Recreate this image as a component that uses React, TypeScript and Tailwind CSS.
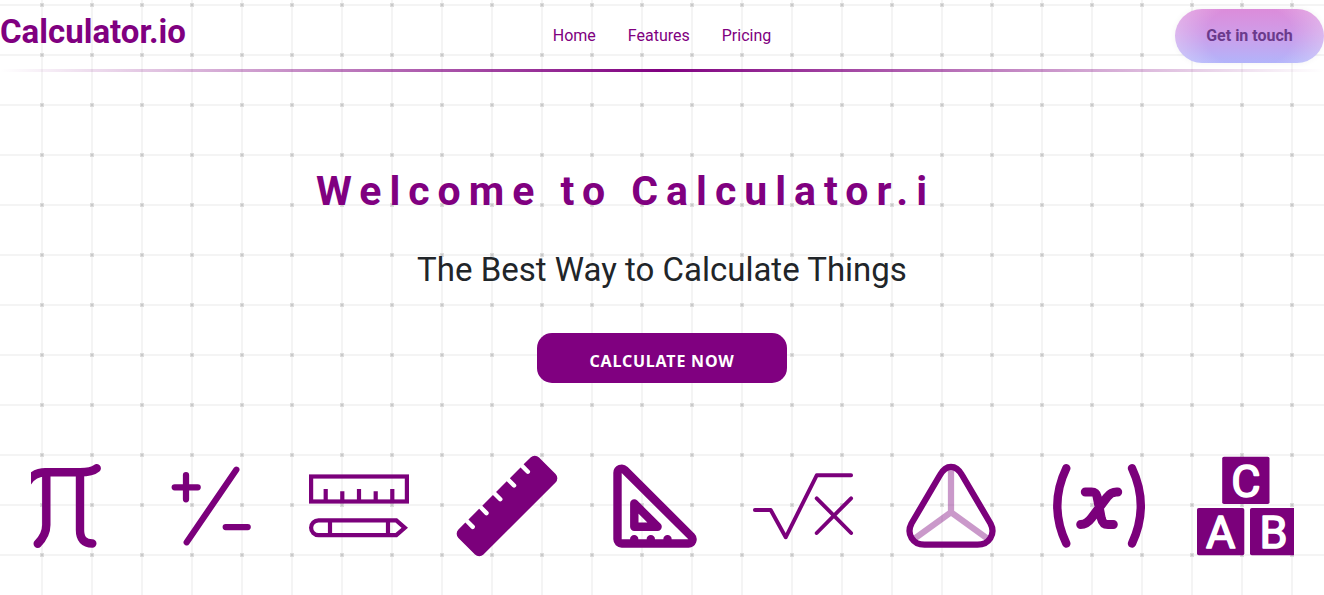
import type { ReactNode } from "react";

const navLinks = ["Home", "Features", "Pricing"];

function Icon({ label, width = 4, children }: { label: string; width?: number; children: ReactNode }) {
  return (
    <svg
      role="img"
      aria-label={label}
      viewBox="0 0 100 100"
      className="size-[100px] shrink-0 overflow-visible text-[#7b007b]"
      fill="none"
      stroke="currentColor"
      strokeWidth={width}
      strokeLinecap="round"
      strokeLinejoin="round"
    >
      {children}
    </svg>
  );
}

function Block({ x, y, letter }: { x: number; y: number; letter: string }) {
  return (
    <g>
      <rect x={x} y={y} width="47.3" height="47.3" rx="1.8" fill="currentColor" stroke="none" />
      <text
        x={x + 23.6}
        y={y + 39.8}
        textAnchor="middle"
        fontFamily="Roboto, sans-serif"
        fontSize="45"
        fill="white"
        stroke="white"
        strokeWidth="1.6"
      >
        {letter}
      </text>
    </g>
  );
}

const rulerNotches = [-39, -19.5, 0, 19.5, 39]
  .map((u) => `H${u - 2.2} V-9.5 a2.2 2.2 0 0 0 4.4 0 V-17.7`)
  .join(" ");

function IconStrip() {
  return (
    <section aria-label="Topics" className="mt-[73px] mr-[30px] ml-[31px] overflow-x-clip pb-4">
      <div className="-ml-[18px] flex gap-12">
        <Icon label="Pi" width={8.4}>
          <path d="M14 27 Q20 16.3 33 16.3 H67 Q79 16.3 83.7 12.3" />
          <path d="M33.3 16.3 V69 Q33.3 79 24.7 87.7" />
          <path d="M67 16.3 V74 Q67 87.5 79.3 87.5" />
        </Icon>
        <Icon label="Plus minus" width={6.25}>
          <path d="M13.7 31.3 H36.7 M25 19 V43.3 M75.3 13.7 L25.7 86.3 M64.7 71 H86.7" />
        </Icon>
        <Icon label="Ruler and pencil" width={4.2}>
          <g strokeLinecap="butt" strokeLinejoin="miter">
            <rect x="2.1" y="20.5" width="95.8" height="25" />
            <path d="M16.7 33 V46 M33.3 35.3 V46 M50 33 V46 M66.7 35.3 V46 M83.3 33 V46" />
            <path d="M87.3 64.4 H9.5 a7.4 7.4 0 0 0 0 14.8 H87.3 L95.8 71.8 Z M21 64.4 V79.2 M79 64.4 V79.2" />
          </g>
        </Icon>
        <Icon label="Ruler">
          <path
            transform="translate(50 50) rotate(-45)"
            fill="currentColor"
            stroke="none"
            d={`M-51 -17.7 ${rulerNotches} H51 a6 6 0 0 1 6 6 V11.7 a6 6 0 0 1 -6 6 H-51 a6 6 0 0 1 -6 -6 V-11.7 a6 6 0 0 1 6 -6 Z`}
          />
        </Icon>
        <Icon label="Set square" width={8.4}>
          <path d="M12.5 16.8 A4.2 4.2 0 0 1 19.7 14 L86.3 80.4 A4.2 4.2 0 0 1 83.5 87.5 H16.7 A4.2 4.2 0 0 1 12.5 83.3 Z" />
          <path d="M29.3 47.5 V70.8 H52.6 Z" />
          <path d="M29.2 83.3 h0.01 M45.8 83.3 h0.01 M62.5 83.3 h0.01" />
        </Icon>
        <Icon label="Square root of x" width={3.9}>
          <path d="M1.9 54 H17.7 L32.7 81.3 L63.7 19.3 H98.1 M63.7 42.3 L98.1 77 M98.1 42.3 L63.7 77" />
        </Icon>
        <Icon label="Pyramid" width={6.25}>
          <path opacity="0.4" strokeLinecap="butt" d="M50 13 V56.3 M13 83 L50 56.3 L87 83" />
          <path d="M39 19 C45 8 55 8 61 19 L89.5 67.5 C95 78 88 88.7 76.5 88.7 H23.5 C12 88.7 5 78 10.5 67.5 Z" />
        </Icon>
        <Icon label="Function of x" width={8.4}>
          <path d="M17.3 12.3 Q-0.7 49.8 17.3 87.5 M83 12.3 Q100.6 49.8 83 87.5" />
          <path
            strokeWidth="9"
            d="M68.7 36 H67.5 C63 36 60.5 38 58 41.2 L42.5 62 C39.5 66 36 68.5 31.7 68.5 M36.3 36 H42.5 C46 36 47.5 37.5 48.2 41 L52.2 62 C53.2 66.5 55 68.5 59 68.5 H64.3"
          />
        </Icon>
        <Icon label="Alphabet blocks">
          <Block x={25.2} y={0.7} letter="C" />
          <Block x={0} y={52} letter="A" />
          <Block x={53} y={52} letter="B" />
        </Icon>
      </div>
    </section>
  );
}

export default function App() {
  return (
    <div className="min-h-screen overflow-x-hidden bg-white bg-[radial-gradient(circle_at_2px_2px,#c8c8c8_1px,#dcdcdc_1.6px,#dcdcdc_2.2px,transparent_2.3px),linear-gradient(#f4f4f4_2px,transparent_2px),linear-gradient(90deg,#f4f4f4_2px,transparent_2px)] bg-[size:50px_50px] bg-[position:40px_3px,0px_4px,41px_0px] font-['Roboto',sans-serif] text-[#212529]">
      <header>
        <div className="grid h-[69px] grid-cols-[1fr_auto_1fr] items-center">
          <a href="#" className="justify-self-start pb-1.5 text-[33px] leading-10 font-bold text-[#800080]">
            Calculator.io
          </a>
          <nav className="flex gap-8 pt-0.5">
            {navLinks.map((link) => (
              <a key={link} href={`#${link.toLowerCase()}`} className="text-base text-[#800080]">
                {link}
              </a>
            ))}
          </nav>
          <button
            type="button"
            className="mt-0.5 h-[54px] w-[149px] justify-self-end rounded-full bg-[radial-gradient(ellipse_65%_130%_at_50%_50%,transparent_45%,#ffffff77_100%),linear-gradient(#dc8cda,#cf9ce8_45%,#b2b4fa)] text-base font-bold text-[#6b3a8c] shadow-[0_0_6px_#0000000d]"
          >
            Get in touch
          </button>
        </div>
        <div className="h-[3px] bg-[linear-gradient(90deg,transparent,#800080,transparent)]" />
      </header>

      <main>
        <div className="flex flex-col items-center">
          <h1 className="mt-[94px] w-[692px] max-w-full text-[41px] leading-[50px] font-bold tracking-[8px] whitespace-nowrap text-[#800080]">
            Welcome to Calculator.i
          </h1>
          <h2 className="mt-[34px] text-center text-[33px] leading-10">The Best Way to Calculate Things</h2>
          <button
            type="button"
            className="mt-[43px] h-[50px] w-[250px] rounded-[15px] bg-[#800080] pt-1.5 font-['Noto_Sans',sans-serif] text-base font-bold tracking-wider text-white"
          >
            CALCULATE NOW
          </button>
        </div>
        <IconStrip />
      </main>
    </div>
  );
}
